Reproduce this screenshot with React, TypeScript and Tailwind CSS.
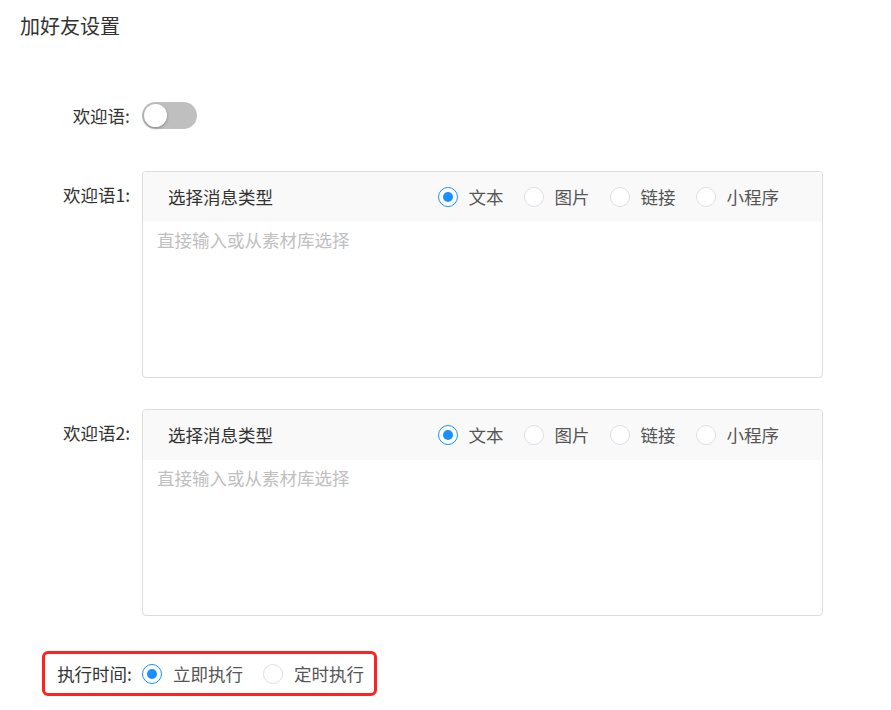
import React from "react";

const font = { fontFamily: '"Noto Sans CJK SC", "Noto Sans", sans-serif' };

function Radio({ checked, label }: { checked?: boolean; label: string }) {
  return (
    <div className="flex items-center gap-[11px]">
      <span
        className={
          "flex h-[20px] w-[20px] items-center justify-center rounded-full border bg-white " +
          (checked ? "border-[#1890ff]" : "border-[#dcdfe6]")
        }
      >
        {checked && <span className="h-[10px] w-[10px] rounded-full bg-[#1890ff]" />}
      </span>
      <span className="text-[17.5px] leading-[24px] text-[#555]">{label}</span>
    </div>
  );
}

function Label({ text }: { text: string }) {
  return (
    <div className="w-[132px] shrink-0 pr-[2px] text-right text-[17.5px] leading-[24px] text-[#333]">
      {text}
    </div>
  );
}

function MessageCard({ label }: { label: string }) {
  return (
    <div className="flex items-start">
      <div className="mt-[12px]">
        <Label text={label} />
      </div>
      <div className="ml-[10px] flex h-[207px] w-[681px] flex-col overflow-hidden rounded-[4px] border border-[#dcdcdc] bg-white">
        <div className="flex h-[50px] items-center justify-between bg-[#f9f9f9] pl-[25px] pr-[43px]">
          <span className="text-[17.5px] leading-[24px] text-[#333]">选择消息类型</span>
          <div className="flex items-center gap-[20px]">
            <Radio checked label="文本" />
            <Radio label="图片" />
            <Radio label="链接" />
            <Radio label="小程序" />
          </div>
        </div>
        <div className="pl-[14px] pt-[6px] text-[17.5px] leading-[24px] text-[#c0c0c0]">
          直接输入或从素材库选择
        </div>
      </div>
    </div>
  );
}

export default function App() {
  return (
    <div className="min-h-[710px] w-[891px] bg-white" style={font}>
      <div className="pl-[20px] pt-[12px] text-[20px] leading-[28px] text-[#333]">加好友设置</div>
      <div className="mt-[62px] flex items-center">
        <Label text="欢迎语:" />
        <div className="ml-[10px] flex h-[27px] w-[55px] items-center rounded-full bg-[#bfbfbf] pl-[2px]">
          <span className="h-[23px] w-[23px] rounded-full bg-white shadow-[0_1px_3px_rgba(0,0,0,0.3)]" />
        </div>
      </div>
      <div className="mt-[42px]">
        <MessageCard label="欢迎语1:" />
      </div>
      <div className="mt-[31px]">
        <MessageCard label="欢迎语2:" />
      </div>
      <div className="ml-[42px] mt-[35px] flex h-[45px] w-[335px] items-center rounded-[6px] border-[3px] border-[#ff2020]">
        <div className="w-[87px] shrink-0 text-right text-[17.5px] leading-[24px] text-[#333]">执行时间:</div>
        <div className="ml-[10px] flex items-center gap-[20px]">
          <Radio checked label="立即执行" />
          <Radio label="定时执行" />
        </div>
      </div>
    </div>
  );
}
